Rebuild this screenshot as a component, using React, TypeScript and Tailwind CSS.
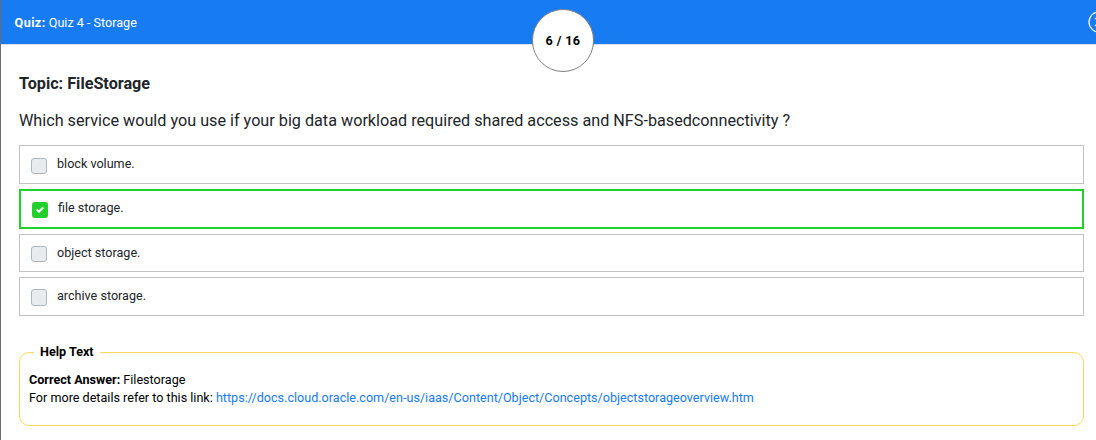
import React from "react";

type Option = { label: string; checked?: boolean; row: string; box: string; text: string };

const options: Option[] = [
  { label: "block volume.", row: "h-[39px] border border-[#c3c3c3] pl-[11px] pt-3", box: "h-4", text: "-mt-1" },
  { label: "file storage.", checked: true, row: "h-10 border-2 border-[#22d02b] pl-[11px] pt-[11px]", box: "h-4", text: "-mt-1" },
  { label: "object storage.", row: "h-[38px] border border-[#c3c3c3] pl-[11px] pt-[11px]", box: "h-4", text: "-mt-[3px]" },
  { label: "archive storage.", row: "h-[39px] border border-[#c3c3c3] pl-[11px] pt-[11px]", box: "h-[17px]", text: "-mt-[3px]" },
];

function OptionRow({ label, checked, row, box, text }: Option) {
  return (
    <label className={`flex items-start ${row}`}>
      {checked ? (
        <span className="flex h-4 w-4 items-center justify-center rounded-[3px] bg-[#22d02b]">
          <svg width="8" height="8" viewBox="0 0 8 8" fill="#fff">
            <path d="M6.564.75l-3.59 3.612-1.538-1.55L0 4.26 2.974 7.25 8 2.193z" />
          </svg>
        </span>
      ) : (
        <span className={`w-4 rounded-[3px] border border-[#adb5bd] bg-[#e9ecef] ${box}`} />
      )}
      <span className={`ml-[10px] text-[12.6px] leading-5 text-[#212529] ${text}`}>{label}</span>
    </label>
  );
}

export default function App() {
  return (
    <div className="h-[440px] w-[1096px] overflow-hidden border-l border-[#6c6c6c] bg-white font-['Roboto',sans-serif] text-[#212529]">
      <header className="relative flex h-[45px] items-start justify-between border-b border-[#dee2e6] bg-[#177bf2] text-white">
        <div className="pl-[13.6px] pt-[13px] text-[12.6px] leading-5">
          <b className="tracking-[0.4px]">Quiz:</b> Quiz 4 - Storage
        </div>
        <svg className="-mr-[14px] mt-[11px] shrink-0" width="22" height="22" viewBox="0 0 22 22" fill="none" stroke="#fff" strokeWidth="1.2">
          <circle cx="11" cy="11" r="10" />
          <path d="M7 7l8 8M15 7l-8 8" />
        </svg>
        <div className="absolute left-[531px] top-[9px] flex h-[63px] w-[62px] items-center justify-center rounded-full border border-[#808080] bg-white pt-px text-[12.6px] font-bold tracking-[0.4px] text-black">
          6 / 16
        </div>
      </header>
      <main className="pl-[18px] pr-3">
        <h1 className="pt-[27px] text-[16.2px] font-bold leading-6">Topic: FileStorage</h1>
        <p className="mt-[13px] text-[16.2px] leading-6">
          Which service would you use if your big data workload required shared access and NFS-basedconnectivity ?
        </p>
        <div className="mt-3 flex flex-col gap-[5px]">
          {options.map((o) => (
            <OptionRow key={o.label} {...o} />
          ))}
        </div>
        <fieldset className="mt-[26px] h-[84px] rounded-[10px] border border-[#ffd75e] pl-[9px] text-[12.6px] leading-[18px] text-black">
          <legend className="ml-[5px] px-[6px] text-[12.6px] font-bold leading-5">Help Text</legend>
          <div className="pt-[9px]">
            <div><b>Correct Answer:</b> Filestorage</div>
            <div>
              For more details refer to this link:{" "}
              <a className="text-[#177bf2]" href="#">https://docs.cloud.oracle.com/en-us/iaas/Content/Object/Concepts/objectstorageoverview.htm</a>
            </div>
          </div>
        </fieldset>
      </main>
    </div>
  );
}
